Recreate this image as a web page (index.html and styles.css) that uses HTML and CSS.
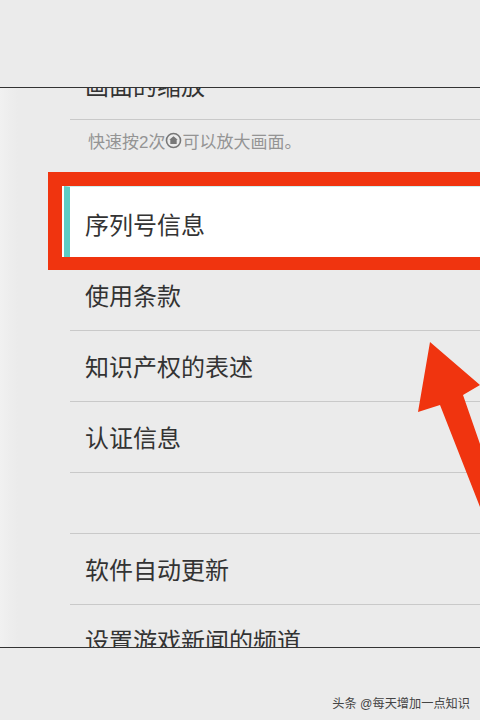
FILE: index.html
```html
<!DOCTYPE html>
<html lang="zh-CN">
<head>
    <meta charset="UTF-8">
    <meta name="viewport" content="width=device-width, initial-scale=1.0">
    <title>设置</title>
    <link rel="stylesheet" href="styles.css">
</head>
<body>
    <header class="top-bar"></header>

    <main class="content">
        <ul class="menu">
            <li class="row row-clipped">画面的缩放</li>
            <li class="hint">快速按2次<svg class="home-icon" viewBox="0 0 16 16"><circle cx="8" cy="8" r="6.6"/><path class="house" d="M8 4 L12 7.2 L11 7.2 L11 11.4 L5 11.4 L5 7.2 L4 7.2 Z"/></svg>可以放大画面。</li>
            <li class="selected"><div class="selected-inner">序列号信息</div></li>
            <li class="row row-short">使用条款</li>
            <li class="row">知识产权的表述</li>
            <li class="row">认证信息</li>
            <li class="row row-blank"></li>
            <li class="row">软件自动更新</li>
            <li class="row">设置游戏新闻的频道</li>
        </ul>
    </main>

    <footer class="bottom-bar">
        <span class="watermark">头条 @每天增加一点知识</span>
    </footer>

    <!-- red arrow drawn over the screenshot -->
    <svg class="arrow" viewBox="0 0 480 720" width="480" height="720">
        <path d="M430 342 L480 385 L463 395 L480 444 L480 507 L440 405 L418 412 Z"/>
    </svg>
</body>
</html>
```

FILE: styles.css
```css
* {
    box-sizing: border-box;
}
html, body {
    height: 100%;
}
body {
    margin: 0;
    height: 720px;
    overflow: hidden;
    display: flex;
    flex-direction: column;
    font-family: "Liberation Sans", "Noto Sans CJK SC", sans-serif;
    background-color: #ebebeb;
    color: #333;
}
.top-bar {
    height: 88px;
    flex: none;
    border-bottom: 1px solid #333;
}
.content {
    height: 560px;
    flex: none;
    overflow: hidden;
    padding-left: 70px;
    border-bottom: 1px solid #333;
    background: linear-gradient(to right, #f1f1f1 0, #eeeeee 8px, #ebebeb 18px);
}
.menu {
    list-style: none;
    margin: 0;
    padding: 0;
}
.row {
    display: flex;
    align-items: center;
    height: 71px;
    padding: 0 0 1px 15px;
    border-bottom: 1px solid #c9c9c9;
    font-size: 24px;
}
.row-clipped {
    margin-top: -39px;
    height: 71px;
    padding-bottom: 0;
}
.row-short {
    height: 61px;
    padding-bottom: 11px;
}
.row-blank {
    height: 61px;
}
.hint {
    display: flex;
    align-items: center;
    height: 52px;
    padding: 0 0 11px 18px;
    font-size: 17px;
    color: #949494;
}
.home-icon {
    width: 17px;
    height: 17px;
    fill: none;
    stroke: #777;
    stroke-width: 1.5;
}
.home-icon .house {
    fill: #777;
    stroke: none;
}
.selected {
    margin-left: -22px;
    height: 98px;
    background-color: #fff;
    border: solid #f0340f;
    border-width: 14px 0 13px 14px;
}
.selected-inner {
    display: flex;
    align-items: center;
    height: 100%;
    margin-left: 2px;
    padding: 3px 0 0 15px;
    background-color: #fff;
    border-top: 1px solid #cdeeee;
    border-left: 6px solid #5ecdc4;
    font-size: 24px;
}
.bottom-bar {
    flex: 1;
    display: flex;
    justify-content: flex-end;
    align-items: flex-end;
    padding: 0 10px 8px 0;
}
.watermark {
    font-size: 12.2px;
    color: #444;
}
.arrow {
    position: absolute;
    top: 0;
    left: 0;
    fill: #f0340f;
}
```
